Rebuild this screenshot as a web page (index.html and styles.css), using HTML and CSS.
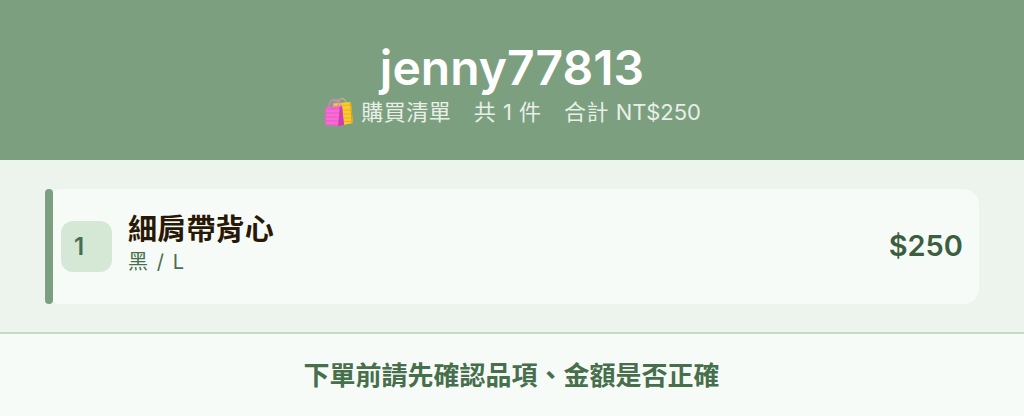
FILE: index.html
```html
<!DOCTYPE html>
<html lang="zh-Hant">
<head>
    <meta charset="UTF-8">
    <meta name="viewport" content="width=device-width, initial-scale=1.0">
    <title>購買清單</title>
    <link rel="stylesheet" href="styles.css">
</head>
<body>
    <div class="header">
        <h1>jenny77813</h1>
        <div class="summary">
            <svg class="bag-icon" viewBox="0 0 30 30" aria-hidden="true">
                <path d="M13 8C13 0 22 0 22 6" fill="none" stroke="#c8b28a" stroke-width="1.2"/>
                <path d="M9 6.5L27 5L29 26L19 28L9 20Z" fill="#f5cf2c"/>
                <path d="M10 9L26.5 8M10 13H27M10 17H27.5M12 21H28M15 24.5H28.5" stroke="#f9a92a" stroke-width="1.2"/>
                <path d="M26 5L27 5.5L29 26L27.5 26.5Z" fill="#d8a41f"/>
                <path d="M1.5 10L18 9L20 28L14 29L1 28Z" fill="#f25fce"/>
                <path d="M16 9L18 9L20 28L14 29Z" fill="#cc3db0"/>
                <path d="M2 14H15M2 18H15M2 22H14.5M2 26H14" stroke="#fa7cda" stroke-width="1"/>
                <path d="M5 11C5 0 14.5 0 14.5 10M9 10C9 1 17 0 17 10" fill="none" stroke="#d58ac0" stroke-width="1.1"/>
            </svg>
            <span>購買清單</span>
            <span class="count">共 1 件</span>
            <span class="total">合計 <span class="amount">NT$250</span></span>
        </div>
    </div>
    <div class="list">
        <div class="item">
            <div class="bar"></div>
            <div class="number">1</div>
            <div class="info">
                <div class="name">細肩帶背心</div>
                <div class="spec">黑 / L</div>
            </div>
            <div class="price">$250</div>
        </div>
    </div>
    <div class="footer">下單前請先確認品項、金額是否正確</div>
</body>
</html>
```

FILE: styles.css
```css
* {
    box-sizing: border-box;
}
body {
    margin: 0;
    height: 416px;
    display: flex;
    flex-direction: column;
    overflow: hidden;
    background-color: #edf4ed;
    font-family: Inter, "Noto Sans CJK TC", sans-serif;
}
.header {
    height: 160px;
    padding-top: 39px;
    background-color: #7c9f7f;
    color: #fff;
}
h1 {
    margin: 0;
    font-size: 48px;
    line-height: 58px;
    font-weight: 600;
    text-align: center;
}
.summary {
    display: flex;
    justify-content: center;
    height: 30px;
    padding-left: 1px;
    font-size: 22px;
    line-height: 30px;
    letter-spacing: 0.5px;
    color: #e8efe7;
    white-space: nowrap;
}
.bag-icon {
    width: 30px;
    height: 30px;
    margin-right: 7px;
}
.count, .total {
    margin-left: 22.5px;
}
.amount {
    letter-spacing: -0.1px;
}
.list {
    height: 172px;
    padding: 29px 45px 28px;
}
.item {
    display: flex;
    align-items: center;
    height: 115px;
    padding-right: 16px;
    border-radius: 16px;
    background-color: #f6fbf7;
}
.bar {
    width: 8px;
    height: 115px;
    border-radius: 4px;
    background-color: #7c9f7f;
}
.number {
    width: 51px;
    height: 51px;
    margin-left: 8px;
    padding-left: 13px;
    border-radius: 12px;
    background-color: #d5e8d5;
    color: #476f4c;
    font-size: 24px;
    line-height: 52px;
    font-weight: 600;
}
.info {
    flex: 1;
    margin-left: 16px;
    padding-bottom: 6px;
}
.name {
    font-size: 29px;
    line-height: 37px;
    letter-spacing: 0.2px;
    font-weight: 700;
    color: #281805;
}
.spec {
    font-size: 20px;
    line-height: 28px;
    letter-spacing: 0.3px;
    word-spacing: 2.5px;
    color: #476f4c;
}
.price {
    padding-bottom: 2px;
    font-size: 29px;
    font-weight: 600;
    color: #3c5e40;
}
.footer {
    height: 84px;
    padding-right: 1px;
    border-top: 2px solid #c2dcc6;
    background-color: #f6fbf7;
    color: #476f4c;
    font-size: 26px;
    line-height: 84px;
    font-weight: 700;
    text-align: center;
}
```
